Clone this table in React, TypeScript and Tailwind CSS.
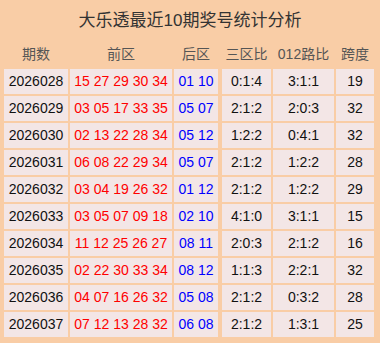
const rows = [
  ["2026028", "15 27 29 30 34", "01 10", "0:1:4", "3:1:1", "19"],
  ["2026029", "03 05 17 33 35", "05 07", "2:1:2", "2:0:3", "32"],
  ["2026030", "02 13 22 28 34", "05 12", "1:2:2", "0:4:1", "32"],
  ["2026031", "06 08 22 29 34", "05 07", "2:1:2", "1:2:2", "28"],
  ["2026032", "03 04 19 26 32", "01 12", "2:1:2", "1:2:2", "29"],
  ["2026033", "03 05 07 09 18", "02 10", "4:1:0", "3:1:1", "15"],
  ["2026034", "11 12 25 26 27", "08 11", "2:0:3", "2:1:2", "16"],
  ["2026035", "02 22 30 33 34", "08 12", "1:1:3", "2:2:1", "32"],
  ["2026036", "04 07 16 26 32", "05 08", "2:1:2", "0:3:2", "28"],
  ["2026037", "07 12 13 28 32", "06 08", "2:1:2", "1:3:1", "25"],
];

const cols = "grid grid-cols-[64px_102px_44px_51px_61px_38px] gap-x-[2px]";

export default function App() {
  return (
    <div
      className="w-[380px] h-[343px] bg-[#f9cda6] px-[4px] overflow-hidden"
      style={{ fontFamily: '"Liberation Sans", "Noto Sans CJK SC", sans-serif' }}
    >
      <div className="h-[42px] flex items-center justify-center text-[17px] text-[#333333]">
        大乐透最近10期奖号统计分析
      </div>
      <div className={`${cols} h-[25px] text-[14px] text-[#555555] mb-[2px]`}>
        <div className="flex items-center justify-center">期数</div>
        <div className="flex items-center justify-center">前区</div>
        <div className="flex items-center justify-center">后区</div>
        <div className="flex items-center justify-center ml-[2px]">三区比</div>
        <div className="flex items-center justify-center">012路比</div>
        <div className="flex items-center justify-center">跨度</div>
      </div>
      <div className="flex flex-col gap-y-[2px]">
        {rows.map((r) => (
          <div key={r[0]} className={`${cols} h-[25px] text-[14px]`}>
            <div className="bg-[#f3e6e6] flex items-center justify-center text-[#111111]">{r[0]}</div>
            <div className="bg-[#f3e6e6] flex items-center justify-center text-[#ff0000]">{r[1]}</div>
            <div className="bg-[#f3e6e6] flex items-center justify-center text-[#0000ff]">{r[2]}</div>
            <div className="bg-[#f3e6e6] flex items-center justify-center text-[#111111] ml-[2px]">{r[3]}</div>
            <div className="bg-[#f3e6e6] flex items-center justify-center text-[#111111]">{r[4]}</div>
            <div className="bg-[#f3e6e6] flex items-center justify-center text-[#111111]">{r[5]}</div>
          </div>
        ))}
      </div>
    </div>
  );
}
